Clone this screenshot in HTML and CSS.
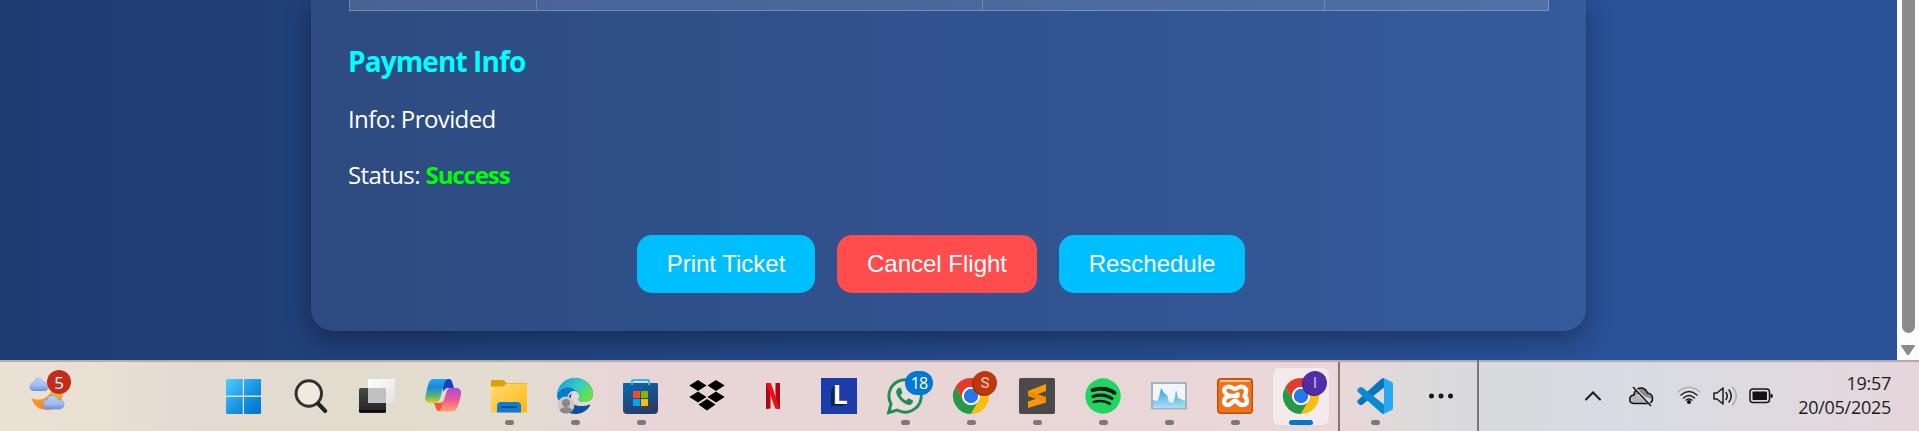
FILE: index.html
```html
<!DOCTYPE html>
<html lang="en">
<head>
<meta charset="utf-8">
<title>Ticket</title>
<link rel="stylesheet" href="styles.css">
</head>
<body>
<div class="viewport">
  <main class="page">
    <section class="card">
      <div class="table-end"><span></span><span></span><span></span><span></span></div>
      <h3 class="heading">Payment Info</h3>
      <p class="line info">Info: Provided</p>
      <p class="line status">Status: <strong>Success</strong></p>
      <div class="actions">
        <button class="btn print">Print Ticket</button>
        <button class="btn cancel">Cancel Flight</button>
        <button class="btn reschedule">Reschedule</button>
      </div>
    </section>
  </main>
  <aside class="scrollbar">
    <div class="thumb"></div>
    <svg class="arrow" viewBox="0 0 16 12"><path d="M2 1h12q1.500 0 .7 1.300L9.200 10.500q-1.200 1.500-2.400 0L1.300 2.300Q.5 1 2 1z" fill="#8b8b8b"/></svg>
  </aside>
</div>

<footer class="taskbar">
  <div class="weather">
    <svg viewBox="0 0 42 44">
      <defs>
        <linearGradient id="cl" x2="0" y2="1"><stop stop-color="#b5d0f5"/><stop offset=".6" stop-color="#9fbdf0"/><stop offset="1" stop-color="#6c8fe0"/></linearGradient>
        <linearGradient id="mn" x2="0" y2="1"><stop stop-color="#f5b52c"/><stop offset="1" stop-color="#f58220"/></linearGradient>
      </defs>
      <path d="M33.500 22C37 32 29 41 19 41C11 41 5 36 3.500 29C12 33 20 29 23 22z" fill="url(#mn)"/>
      <path d="M5 22a4.800 4.800 0 0 1 .3-9.300C6.500 7 14 7 15.500 12C21 12 22 22 17 22z" fill="url(#cl)"/>
      <path d="M19 40a4.800 4.800 0 0 1 .3-9.500C20.500 25 28.500 25 30 30.300C38 30 37.500 40 31.500 40z" fill="url(#cl)" stroke="#7396df" stroke-width=".7"/>
    </svg>
    <span class="badge five">5</span>
  </div>

  <nav class="apps">
    <div class="app"><svg viewBox="0 0 36 36">
      <defs><linearGradient id="win" x2="1" y2="1"><stop stop-color="#4cd0ff"/><stop offset=".55" stop-color="#1793df"/><stop offset="1" stop-color="#0070d0"/></linearGradient></defs>
      <path d="M-1 2.300Q-1 1 .3 1H15.700V17.500H-1zM17 1H32.700Q34 1 34 2.300V17.500H17zM-1 19H15.700V36H.3Q-1 36-1 34.700zM17 19H34V34.700Q34 36 32.700 36H17z" fill="url(#win)"/></svg></div>

    <div class="app"><svg viewBox="0 0 36 36">
      <circle cx="15.800" cy="15.500" r="12.700" fill="#efe9e0" stroke="#333130" stroke-width="3"/><path d="M25 25.500L32.200 33" stroke="#222" stroke-width="4" stroke-linecap="round"/></svg></div>

    <div class="app"><svg viewBox="0 0 36 36">
      <defs><linearGradient id="tk" x2="0" y2="1"><stop stop-color="#484848"/><stop offset="1" stop-color="#222"/></linearGradient>
      <linearGradient id="tw" x2="1" y2="1"><stop stop-color="#fff"/><stop offset="1" stop-color="#e2e2e4"/></linearGradient></defs>
      <rect y="10" width="27" height="25" rx="1.500" fill="url(#tk)"/><path d="M0 33h27" stroke="#050505" stroke-width="1.500"/>
      <rect x="9" y="1" width="27" height="24" rx="1" fill="url(#tw)"/><rect x="9" y="10" width="18" height="15" fill="#c1c1c1"/></svg></div>

    <div class="app"><svg viewBox="0 0 36 36">
      <defs>
        <linearGradient id="ca" x2="0" y2="1"><stop stop-color="#25a8ef"/><stop offset=".35" stop-color="#1788dc"/><stop offset=".7" stop-color="#55b573"/><stop offset="1" stop-color="#e9d011"/></linearGradient>
        <linearGradient id="cb" x2="0" y2="1"><stop stop-color="#a44ee5"/><stop offset=".5" stop-color="#ee5595"/><stop offset="1" stop-color="#ffa56a"/></linearGradient>
      </defs>
      <path d="M17 1H24Q26.500 1 27.500 5L29 10H23Q20 10 18.500 14z" fill="#1442c5"/>
      <path d="M9 25H15Q18 25 19 20L16.500 33H14Q11.500 33 10.500 29z" fill="#f05a3c"/>
      <path d="M8 1H23Q20 2 19 6L15.500 19Q14 25 10 25H5Q-1 25 .5 18L3 7Q4.500 1 8 1z" fill="url(#ca)"/>
      <path d="M29 10H32Q37 11 36 17L33 28Q31 33.500 27 33.500H13Q16 32 17 29L21 15Q22.500 10 26 10z" fill="url(#cb)"/></svg></div>

    <div class="app run"><svg viewBox="0 0 36 36">
      <defs><linearGradient id="fo" x2="1" y2="1"><stop stop-color="#ffdb70"/><stop offset="1" stop-color="#fab814"/></linearGradient></defs>
      <path d="M0 3Q0 2 1 2H11.500Q13 2 14 3.500L15.500 5H35Q36 5 36 6V12H0z" fill="#dfa007"/>
      <path d="M0 8.500H11Q13 8.500 14 7T17 5.500H35Q36 5.500 36 6.500V34.500H0z" fill="url(#fo)"/>
      <path d="M6 34.500V28Q6 24 10 24H26Q30 24 30 28V34.500z" fill="#1379cd"/><path d="M11 29.200H25" stroke="#084b91" stroke-width="1.700" stroke-linecap="round"/></svg><i></i></div>

    <div class="app run"><svg viewBox="0 0 36 36">
      <defs><linearGradient id="ed" x2="1" y2=".5"><stop stop-color="#199bd5"/><stop offset=".55" stop-color="#34c6ce"/><stop offset="1" stop-color="#66e248"/></linearGradient></defs>
      <path d="M0 18C0 8 8 0 18 0C29 0 36 8 36 16C36 22 31 24 27 24C22 24 21 22 22 20C24 17 21 13 17 13C11 13 9 20 12 26C8 25 0 24 0 18z" fill="#087acd"/>
      <path d="M0 17C1 7 8 0 18 0C29 0 36 8 36 16C36 22 31 24 27 24C22 24 21 22 22 20C23 16 20 13 17 11.500C12 7 3 10 0 17z" fill="url(#ed)"/>
      <path d="M15 15C12 20 15 29 25 28Q29 28 32.500 26.500Q34 26.500 32 29C27 37 15 38 9 33C8 27 10 18 15 15z" fill="#0c519b"/>
      <circle cx="9" cy="27" r="8.500" fill="#cbc9c7"/><circle cx="9" cy="25" r="4" fill="#8b8987"/><path d="M2.500 33Q4 29 9 29T15.500 33Q9 38 2.500 33z" fill="#8b8987"/></svg><i></i></div>

    <div class="app run"><svg viewBox="0 0 36 36">
      <defs><linearGradient id="st" x2=".4" y2="1"><stop stop-color="#0968b7"/><stop offset="1" stop-color="#293e66"/></linearGradient></defs>
      <path d="M0 5.500Q0 5 1 5H34Q35 5 35 6V32Q35 36 31 36H4Q0 36 0 32z" fill="url(#st)"/>
      <path d="M9 7V3Q9 2 10 2H25Q26 2 26 3V7" fill="none" stroke="#28bdf2" stroke-width="2"/>
      <path d="M10 13h7v7h-7z" fill="#f25022"/><path d="M18 13h7v7h-7z" fill="#7fba00"/><path d="M10 21h7v7h-7z" fill="#00a4ef"/><path d="M18 21h7v7h-7z" fill="#ffb900"/></svg><i></i></div>

    <div class="app"><svg viewBox="0 0 36 36"><path d="M9 2L17.500 7.500L9 13L.3 7.500zM27 2L35.700 7.500L27 13L18.500 7.500zM9 13.500L17.500 19L9 24.500L.3 19zM27 13.500L35.700 19L27 24.500L18.500 19zM18 21L26.500 26.500L18 32.500L9.500 26.500z" fill="#000"/></svg></div>

    <div class="app"><svg viewBox="0 0 36 36"><path d="M11 5H15.500V30.500L11 31zM20.500 5H25V31L20.500 30.500z" fill="#ad0712"/><path d="M11 5H15.800L25 31L20.300 30.500z" fill="#eb0e18"/></svg></div>

    <div class="app"><svg viewBox="0 0 36 36"><path d="M0 0h36v36H0z" fill="#1d3cac"/><path d="M13 8L10 13V28H21L26 26V22H17V8z" fill="#082747"/><text class="logo-l" x="11.500" y="26">L</text></svg></div>

    <div class="app run"><svg viewBox="0 0 36 36"><path d="M1.700 34.500L4 25.800A16.200 16.200 0 1 1 10.200 32z" fill="#ebdddc" stroke="#208d58" stroke-width="3"/><path d="M12.300 9.500Q10 10 9.200 13C8.500 19 17 27 23 27Q26 26 26 22.500L21.500 20.200L19 22.800Q15 21 13.500 17.300L15.500 14.800L13.800 10z" fill="#208d58"/></svg><b class="badge eighteen">18</b><i></i></div>

    <div class="app run"><svg viewBox="0 0 36 36">
      <path d="M2.400 9A18 18 0 0 1 33.600 9H18A9 9 0 0 0 10.200 22.500z" fill="#e33b2e"/><path d="M2.400 9L10.200 22.500A9 9 0 0 0 25.800 22.500L18 36A18 18 0 0 1 2.400 9z" fill="#279847"/><path d="M33.600 9A18 18 0 0 1 18 36L25.800 22.500A9 9 0 0 0 25.800 13.500L24 9z" fill="#fbbd0c"/><circle cx="18" cy="18" r="9" fill="#fff"/><circle cx="18" cy="18" r="7.200" fill="#2677e8"/></svg><b class="badge s">S</b><i></i></div>

    <div class="app run"><svg viewBox="0 0 36 36"><rect width="36" height="36" rx="2" fill="#4a4a4a"/><path d="M9 13L27 6V13L17.500 16.500L27 19V24.500L9 30V23.500L18 20.500L9 18z" fill="#ff9800"/><path d="M9 13L27 19V24.500L9 18z" fill="#f88a00"/></svg><i></i></div>

    <div class="app run"><svg viewBox="0 0 36 36"><circle cx="18" cy="18" r="17.700" fill="#1fd760"/><g fill="none" stroke="#101b14" stroke-linecap="round"><path d="M7.500 12.200Q20 8.500 29.500 14.800" stroke-width="4"/><path d="M8 18.500Q18.500 15 27 20.500" stroke-width="3.200"/><path d="M8.700 24Q18 21.300 25 25.800" stroke-width="2.600"/></g></svg><i></i></div>

    <div class="app run"><svg viewBox="0 0 36 36">
      <defs><linearGradient id="pf" x2="0" y2="1"><stop stop-color="#35a0df"/><stop offset="1" stop-color="#a6ddfa"/></linearGradient></defs>
      <rect x="1" y="5" width="34" height="25.500" fill="#f1f5f7" stroke="#a5b1bb" stroke-width="2"/><path d="M2 22L6.500 23L8.500 17L10 10L13 15L16 17L18 24L22 25L24 19L25 12L27 20L30 21L34 23V29.500H2z" fill="url(#pf)"/></svg><i></i></div>

    <div class="app run"><svg viewBox="0 0 36 36"><rect x=".7" y=".7" width="34.600" height="34.600" rx="3" fill="#f2711c" stroke="#bb5008" stroke-width="1.400"/><path d="M3 2h30v2H3z" fill="#ffbd89"/><path d="M14 18C7 17 5 10 10 9C14 7.500 16 11 18 11C20 11 22 7.500 26 9C31 11 29 15 27.500 18C31 21 31 26 26.500 27C22 28 21 23 18 23C15 23 14 28 9.500 27C5 25 7 18 14 18H20.500V14.500" fill="none" stroke="#fff" stroke-width="4.300" stroke-linejoin="round"/></svg><i></i></div>

    <div class="app run active"><svg viewBox="0 0 36 36">
      <path d="M2.400 9A18 18 0 0 1 33.600 9H18A9 9 0 0 0 10.200 22.500z" fill="#e33b2e"/><path d="M2.400 9L10.200 22.500A9 9 0 0 0 25.800 22.500L18 36A18 18 0 0 1 2.400 9z" fill="#279847"/><path d="M33.600 9A18 18 0 0 1 18 36L25.800 22.500A9 9 0 0 0 25.800 13.500L24 9z" fill="#fbbd0c"/><circle cx="18" cy="18" r="9" fill="#fff"/><circle cx="18" cy="18" r="7.200" fill="#2677e8"/></svg><b class="badge profile">I</b><i></i></div>

    <div class="divider"></div>

    <div class="app run"><svg viewBox="0 0 36 36">
      <path d="M27 0V9.500L5.500 26.500Q4 27.500 2.500 26.500L.7 24.800Q-.5 23.300 1 22L24.500.8Q26 0 27 0z" fill="#0875b9"/><path d="M27 36V26.500L5.500 9.500Q4 8.500 2.500 9.500L.7 11.200Q-.5 12.700 1 14L24.500 35.200Q26 36 27 36z" fill="#078bd3"/><path d="M26.500 0L35 4Q36 4.600 36 6V30Q36 31.400 35 32L26.500 36Q27 36 27 35V1z" fill="#27a8f3"/></svg><i></i></div>

    <div class="app"><svg viewBox="0 0 36 36"><g fill="#161616"><circle cx="8.500" cy="18" r="2.500"/><circle cx="18" cy="18" r="2.500"/><circle cx="27.500" cy="18" r="2.500"/></g></svg></div>
    <div class="divider last"></div>
  </nav>

  <div class="tray">
    <svg class="chevron" viewBox="0 0 24 24"><path d="M5 15.500L12 8.500L19 15.500" fill="none" stroke="#1b1b1b" stroke-width="2" stroke-linecap="round"/></svg>
    <svg class="cloud" viewBox="0 0 24 24"><path d="M5.500 19.500Q.8 19.500.8 15.500T5 11Q6 4 12 4Q16.500 4 18.500 9Q23.500 10 23.500 14.500T19 19.500z" fill="#dcdcdc"/><path d="M6 11Q8 4.500 12.500 4.500Q17 5 18.500 9.500Q23 11 22.500 15L17 13L12 10z" fill="#8c8c8c"/><path d="M2 15Q5 9 10 12L18 19H5Q2 18 2 15z" fill="#b5b5b5"/><path d="M5.500 19.500Q.8 19.500.8 15.500T5 11Q6 4 12 4Q16.500 4 18.500 9Q23.500 10 23.500 14.500T19 19.500z" fill="none" stroke="#111" stroke-width="1.600"/><path d="M5 3L22 21.500" stroke="#e4e4e4" stroke-width="2.500"/><path d="M4 3L22 22" stroke="#111" stroke-width="1.500"/></svg>
    <svg class="wifi" viewBox="0 0 24 24"><g fill="none" stroke="#1b1b1b" stroke-width="1.500" stroke-linecap="round"><path d="M1 8Q12-1.500 23 8" stroke="#afafb4"/><path d="M4 11Q12 4 20 11M6.500 14Q12 9 17.500 14"/></g><path d="M8.500 16.500Q12 13.500 15.500 16.500" fill="none" stroke="#1b1b1b" stroke-width="1.300"/><circle cx="12" cy="18" r="2.100" fill="#111"/></svg>
    <svg class="sound" viewBox="0 0 24 24"><g fill="none" stroke="#1b1b1b" stroke-width="1.500" stroke-linecap="round" stroke-linejoin="round"><path d="M1 9H4L10 4V20L4 15H1z"/><path d="M13 8.500Q15.500 12 13 15.500M16 6Q20.500 12 16 18"/><path d="M19.500 3Q27 12 19.500 21" stroke="#b0b0b4"/></g></svg>
    <svg class="battery" viewBox="0 0 24 24"><rect x="1" y="5" width="19.500" height="13.500" rx="3" fill="none" stroke="#161616" stroke-width="1.500"/><rect x="3.500" y="7.500" width="14.500" height="8.500" rx=".8" fill="#111"/><path d="M21.500 9.500Q24 10 24 12T21.500 14z" fill="#111"/></svg>
    <div class="clock"><time>19:57</time><time class="date">20/05/2025</time></div>
  </div>
</footer>
</body>
</html>
```
FILE: styles.css
```css
* { box-sizing: border-box; }
body {
  margin: 0;
  width: 1919px;
  height: 431px;
  overflow: hidden;
  font-family: "Open Sans", "Noto Sans", sans-serif;
}
svg { display: block; overflow: visible; }

.viewport { display: flex; height: 360px; }
.page {
  flex: 1;
  height: 360px;
  overflow: hidden;
  background: linear-gradient(to right, #1e3c72, #2a5298 88%);
}
.card {
  width: 1275px;
  height: 331px;
  margin-left: 311px;
  padding: 0 37px 0 38px;
  border-radius: 0 0 22px 22px;
  background: rgba(255, 255, 255, .06);
  box-shadow: 0 8px 25px rgba(0, 0, 0, .35);
  color: #fff;
}
.table-end {
  display: grid;
  grid-template-columns: 187px 446px 342px 1fr;
  height: 11px;
  border: solid rgba(255, 255, 255, .25);
  border-width: 0 1px 1px 0;
  background: rgba(255, 255, 255, .13);
}
.table-end span { border-left: 1px solid rgba(255, 255, 255, .2); }
.heading {
  margin: 31px 0 0 -1px;
  font-size: 28px;
  line-height: 38px;
  letter-spacing: -.9px;
  color: #0ff;
}
.line { margin: 0 0 0 -1px; font-size: 24px; line-height: 32px; letter-spacing: -.6px; }
.info { margin-top: 23px; }
.status { margin-top: 24px; }
.status strong { color: #0f0; letter-spacing: -1.1px; }
.actions { display: flex; gap: 22px; margin: 44px 0 0 288px; }
.btn {
  height: 58px;
  padding: 0;
  border: 0;
  border-radius: 15px;
  background: #00bfff;
  color: #fff;
  font: 24px "Liberation Sans", sans-serif;
}
.print { width: 178px; }
.cancel { width: 200px; background: #ff4d4d; }
.reschedule { width: 186px; }

.scrollbar {
  display: flex;
  flex-direction: column;
  align-items: center;
  width: 22px;
  background: #fcfcfc;
}
.thumb { width: 13px; height: 333px; border-radius: 0 0 7px 7px; background: #8b8b8b; }
.arrow { width: 16px; height: 12px; margin-top: 11px; }

.taskbar {
  display: flex;
  height: 71px;
  border-top: 2px solid rgba(120, 112, 112, .45);
  background: linear-gradient(to right, #eae0d3 0, #e9dfd3 100px, #e4dad2 200px, #e2dccf 330px, #e2ddd0 500px, #e8d6d6 620px, #e9d7d9 1340px, #dcdadb 1420px, #d9dadd 1490px, #d9dbe3 1610px, #dddbe0 1750px, #e5d6db 1919px);
}
.weather { position: relative; width: 212px; padding: 4px 0 0 28px; }
.weather svg { width: 42px; height: 44px; margin-top: 3px; }
.badge {
  position: absolute;
  display: flex;
  align-items: center;
  justify-content: center;
  width: 24px;
  height: 24px;
  border-radius: 12px;
  color: #fff;
  font-weight: 400;
}
.five { left: 47px; top: 8px; background: #c42b1c; font-size: 17px; }

.apps { display: flex; }
.app {
  position: relative;
  display: flex;
  flex-direction: column;
  align-items: center;
  width: 66px;
  padding-top: 16px;
}
.app > svg { position: relative; width: 36px; height: 36px; }
.app i { position: relative; width: 9px; height: 5px; margin-top: 6px; border-radius: 3px; background: #807778; }
.app.active i { width: 24px; background: #0078d4; }
.active::before {
  content: "";
  position: absolute;
  left: 5px;
  top: 6px;
  width: 56px;
  height: 57px;
  border-radius: 6px;
  background: #f4eaeb;
  box-shadow: 0 0 0 1px #e4d5d7;
}
.eighteen { left: 33px; top: 9px; width: 28px; background: #0078d4; font-size: 16px; letter-spacing: -.8px; }
.s { left: 35px; top: 9px; background: #bd360e; color: #f2b4a0; font: 500 15px Roboto, sans-serif; box-shadow: -1px 1px 0 #8e2c10; }
.profile { left: 35px; top: 9px; background: #512da8; color: #b9a4df; font: 500 14px Roboto, sans-serif; box-shadow: -1px 1px 0 #3d2383; }
.logo-l { fill: #fff; font: bold 27px "Open Sans", sans-serif; }
.divider { width: 2px; height: 69px; margin: 0 2px 0 4px; background: #817778; }
.last { height: 71px; margin: -2px 0 0 3px; background: #77777a; }

.tray { display: flex; flex: 1; padding-top: 22px; }
.tray > svg { width: 24px; height: 24px; }
.chevron { margin-left: 102px; }
.cloud { margin-left: 24px; }
.wifi { margin-left: 24px; }
.sound { margin-left: 12px; }
.battery { margin-left: 12px; }
.clock {
  display: flex;
  flex-direction: column;
  align-items: flex-end;
  flex: 1;
  margin: -13px 28px 0 0;
  font-size: 18px;
  line-height: 24px;
  letter-spacing: -.28px;
  color: #1c1c1c;
}
```
